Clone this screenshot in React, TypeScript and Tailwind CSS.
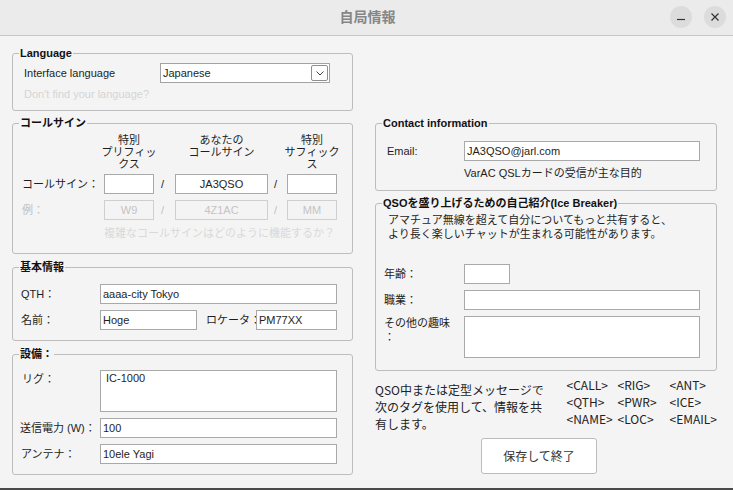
import React from "react";

const SANS = "font-['Liberation_Sans','Noto_Sans_CJK_JP',sans-serif]";
const NOTO = "font-['Noto_Sans_CJK_JP','Noto_Sans',sans-serif]";

function Group({ title, className = "", children }: { title: string; className?: string; children: React.ReactNode }) {
  return (
    <fieldset className={`border border-[#bdbdbd] rounded-[3px] ${className}`}>
      <legend className="ml-[6px] px-[1px] font-bold text-[11px] leading-[14px] text-[#111]">{title}</legend>
      {children}
    </fieldset>
  );
}

function Field({ value = "", className = "", center = false }: { value?: string; className?: string; center?: boolean }) {
  return (
    <input
      readOnly
      value={value}
      className={`h-[20px] bg-white border border-[#a9a9a9] text-[11px] text-[#1e1e1e] outline-none ${center ? "text-center" : "pl-[2px]"} ${className}`}
    />
  );
}

function Ghost({ value, className = "" }: { value: string; className?: string }) {
  return (
    <div className={`h-[20px] border border-[#cfcfcf] flex items-center justify-center text-[11px] text-[#c4c4c4] ${className}`}>
      {value}
    </div>
  );
}

export default function App() {
  return (
    <div className={`w-[733px] h-[490px] bg-[#f4f4f4] flex flex-col overflow-hidden text-[11px] text-[#1e1e1e] ${SANS}`}>
      {/* Title bar */}
      <div className="h-[36px] shrink-0 bg-[#ebebeb] border-b border-[#c6c6c6] flex items-center relative">
        <div className="flex-1 text-center text-[14px] font-bold text-[#868686] pl-[2px]">自局情報</div>
        <div className="absolute right-[7px] top-[6px] flex gap-[12px]">
          <button className="w-[22px] h-[22px] rounded-full bg-[#dcdcdc] flex items-center justify-center">
            <svg width="10" height="10" viewBox="0 0 10 10">
              <line x1="1" y1="7.5" x2="9" y2="7.5" stroke="#333" strokeWidth="1.2" />
            </svg>
          </button>
          <button className="w-[22px] h-[22px] rounded-full bg-[#dcdcdc] flex items-center justify-center">
            <svg width="10" height="10" viewBox="0 0 10 10">
              <path d="M1.5 1.5 L8.5 8.5 M8.5 1.5 L1.5 8.5" stroke="#333" strokeWidth="1.2" />
            </svg>
          </button>
        </div>
      </div>

      <div className="flex-1 grid grid-cols-[341px_342px] gap-x-[22px] pl-[12px] pt-[10px] items-start">
        {/* Left column */}
        <div className="flex flex-col">
          <Group title="Language" className="pb-[9px]">
            <div className="mt-[3px] flex items-center pl-[11px]">
              <span className="w-[136px]">Interface language</span>
              <div className="w-[170px] h-[20px] bg-white border border-[#a3a3a3] flex items-center justify-between pl-[2px] pr-[1px]">
                <span>Japanese</span>
                <div className="w-[17px] h-[16px] border border-[#8e8e8e] rounded-[2px] flex items-center justify-center">
                  <svg width="8" height="5" viewBox="0 0 8 5">
                    <polyline points="0.5,0.5 4,4 7.5,0.5" fill="none" stroke="#444" strokeWidth="1" />
                  </svg>
                </div>
              </div>
            </div>
            <div className="mt-[4px] pl-[11px] leading-[14px] text-[#d4d4d4]">Don't find your language?</div>
          </Group>

          <Group title="コールサイン" className="mt-[5px] pb-[13px]">
            <div className="mt-[4px] flex pl-[91px] leading-[12px] text-center">
              <div className="w-[50px] flex flex-col items-center whitespace-nowrap">
                <span>特別</span>
                <span>プリフィッ</span>
                <span>クス</span>
              </div>
              <div className="w-[21px]" />
              <div className="w-[93px] flex flex-col items-center whitespace-nowrap">
                <span>あなたの</span>
                <span>コールサイン</span>
              </div>
              <div className="w-[19px]" />
              <div className="w-[50px] flex flex-col items-center whitespace-nowrap">
                <span>特別</span>
                <span>サフィック</span>
                <span>ス</span>
              </div>
            </div>
            <div className="mt-[4px] flex items-center pl-[9px]">
              <span className="w-[82px]">コールサイン：</span>
              <Field className="w-[50px]" center />
              <span className="w-[21px] text-center pr-[4px]">/</span>
              <Field className="w-[93px]" value="JA3QSO" center />
              <span className="w-[19px] text-center pr-[4px]">/</span>
              <Field className="w-[50px]" center />
            </div>
            <div className="mt-[6px] flex items-center pl-[9px] text-[#c0c0c0]">
              <span className="w-[82px]">例：</span>
              <Ghost className="w-[50px]" value="W9" />
              <span className="w-[21px] text-center pr-[4px]">/</span>
              <Ghost className="w-[93px]" value="4Z1AC" />
              <span className="w-[19px] text-center pr-[4px]">/</span>
              <Ghost className="w-[50px]" value="MM" />
            </div>
            <div className="mt-[6px] pl-[91px] leading-[14px] text-[#d9d9d9]">複雑なコールサインはどのように機能するか？</div>
          </Group>

          <Group title="基本情報" className="mt-[6px] pb-[10px]">
            <div className="mt-[10px] flex items-center pl-[8px]">
              <span className="w-[79px]">QTH：</span>
              <Field className="w-[237px]" value="aaaa-city Tokyo" />
            </div>
            <div className="mt-[6px] flex items-center pl-[8px]">
              <span className="w-[79px]">名前：</span>
              <Field className="w-[97px]" value="Hoge" />
              <span className="w-[59px] pl-[9px] whitespace-nowrap">ロケータ：</span>
              <Field className="w-[81px]" value="PM77XX" />
            </div>
          </Group>

          <Group title="設備：" className="mt-[6px] pb-[10px]">
            <div className="mt-[9px] flex items-start pl-[9px]">
              <span className="w-[78px] pt-[1px]">リグ：</span>
              <textarea
                readOnly
                value="IC-1000"
                className="w-[237px] h-[42px] bg-white border border-[#a9a9a9] resize-none outline-none pl-[5px] pt-[0px] text-[11px] leading-[14px]"
              />
            </div>
            <div className="mt-[6px] flex items-center pl-[7px]">
              <span className="w-[80px] whitespace-nowrap">送信電力 (W)：</span>
              <Field className="w-[237px]" value="100" />
            </div>
            <div className="mt-[6px] flex items-center pl-[8px]">
              <span className="w-[79px]">アンテナ：</span>
              <Field className="w-[237px]" value="10ele Yagi" />
            </div>
          </Group>
        </div>

        {/* Right column */}
        <div className="flex flex-col">
          <Group title="Contact information" className="mt-[70px] pb-[10px]">
            <div className="mt-[11px] flex items-center pl-[11px]">
              <span className="w-[77px]">Email:</span>
              <Field className="w-[236px]" value="JA3QSO@jarl.com" />
            </div>
            <div className="mt-[5px] pl-[88px] leading-[14px]">VarAC QSLカードの受信が主な目的</div>
          </Group>

          <Group title="QSOを盛り上げるための自己紹介(Ice Breaker)" className="mt-[5px] pb-[12px]">
            <div className="mt-[4px] pl-[12px] leading-[13.5px]">
              アマチュア無線を超えて自分についてもっと共有すると、
              <br />
              より長く楽しいチャットが生まれる可能性があります。
            </div>
            <div className="mt-[23px] flex items-center pl-[8px]">
              <span className="w-[80px]">年齢：</span>
              <Field className="w-[46px]" />
            </div>
            <div className="mt-[6px] flex items-center pl-[8px]">
              <span className="w-[80px]">職業：</span>
              <Field className="w-[236px]" />
            </div>
            <div className="mt-[6px] flex items-start pl-[8px]">
              <span className="w-[80px] leading-[14px]">
                その他の趣味
                <br />
                ：
              </span>
              <textarea readOnly className="w-[236px] h-[42px] bg-white border border-[#a9a9a9] resize-none outline-none" />
            </div>
          </Group>

          <div className={`flex items-start text-[12px] leading-[17px] text-[#222] ${NOTO}`}>
            <div className="w-[192px] pt-[10px]">
              QSO中または定型メッセージで
              <br />
              次のタグを使用して、情報を共
              <br />
              有します。
            </div>
            <div className="pt-[5px] grid grid-cols-[51px_52px_auto]">
              <span>&lt;CALL&gt;</span>
              <span>&lt;RIG&gt;</span>
              <span>&lt;ANT&gt;</span>
              <span>&lt;QTH&gt;</span>
              <span>&lt;PWR&gt;</span>
              <span>&lt;ICE&gt;</span>
              <span>&lt;NAME&gt;</span>
              <span>&lt;LOC&gt;</span>
              <span>&lt;EMAIL&gt;</span>
            </div>
          </div>
          <button
            className={`mt-[6px] ml-[106px] w-[116px] h-[36px] bg-white border border-[#bcbcbc] rounded-[3px] text-[12px] text-[#333] ${NOTO}`}
          >
            保存して終了
          </button>
        </div>
      </div>
      <div className="h-[2px] shrink-0 bg-[#4a4a4a]" />
    </div>
  );
}
